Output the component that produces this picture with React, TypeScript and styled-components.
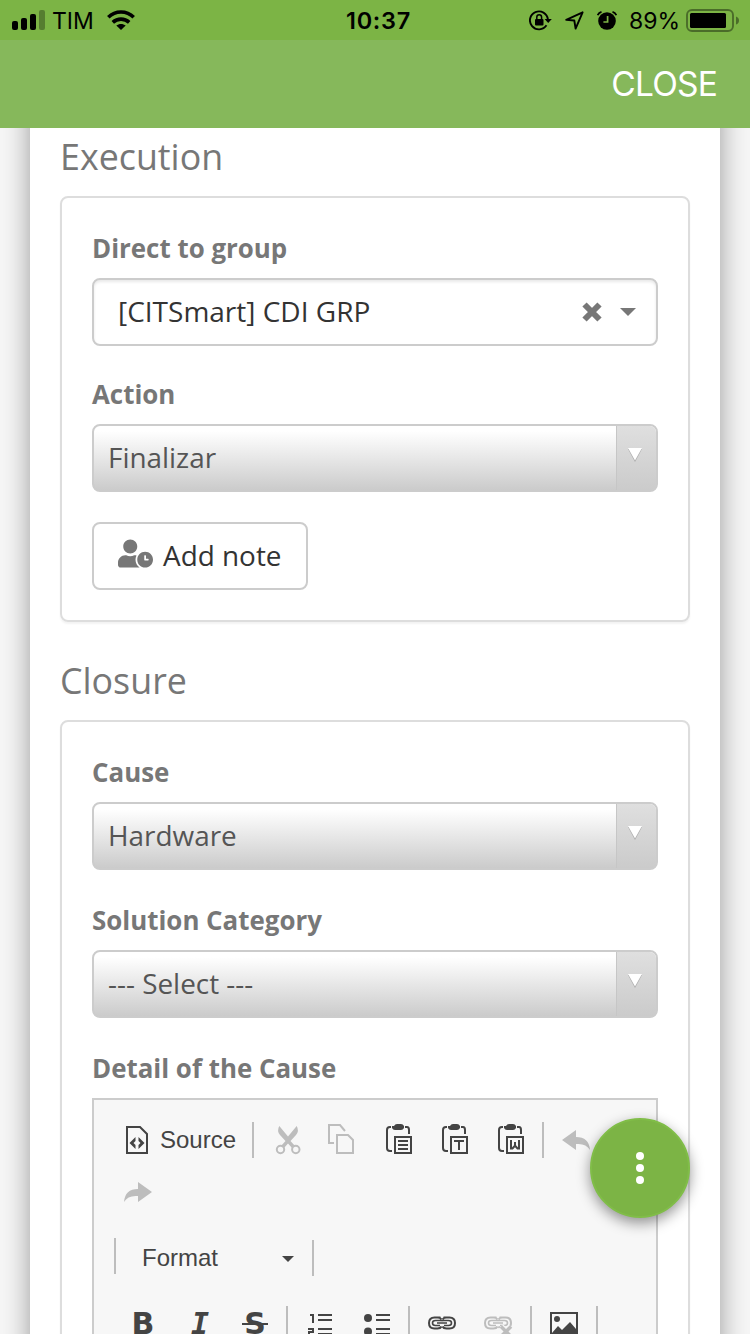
import React from "react";
import styled, { createGlobalStyle, css } from "styled-components";
import { FaUserClock } from "react-icons/fa";

const GlobalStyle = createGlobalStyle`
  * { box-sizing: border-box; }
  html, body { margin: 0; padding: 0; }
  body { overflow: hidden; background: #f6f6f6; }
`;

const sans = `"Open Sans", "Noto Sans", sans-serif`;
const system = `Inter, "Liberation Sans", sans-serif`;

const Screen = styled.div`
  width: 750px;
  height: 1334px;
  overflow: hidden;
  display: flex;
  flex-direction: column;
  background: #f6f6f6;
  font-family: ${sans};
  color: #333;
`;

const StatusBar = styled.div`
  flex: none;
  height: 40px;
  padding: 0 11px 0 12px;
  display: grid;
  grid-template-columns: 1fr auto 1fr;
  align-items: center;
  background: #7cb445;
  color: #000;
  font: 400 23px/40px ${system};
`;

const StatusGroup = styled.div<{ $end?: boolean }>`
  display: flex;
  align-items: center;
  justify-content: ${(p) => (p.$end ? "flex-end" : "flex-start")};
  svg { flex: none; display: block; }
`;

const Carrier = styled.span`
  margin: 0 13px 0 7px;
  padding-top: 2px;
  line-height: 38px;
`;

const Clock = styled.span`
  padding: 2px 0 0 6px;
  font-size: 23.5px;
  line-height: 38px;
  font-weight: 600;
  letter-spacing: 0.7px;
`;

const Percent = styled.span`
  margin: 0 6px 0 12px;
  padding-top: 2px;
  line-height: 38px;
`;

const StatusIcons = styled.span`
  display: flex;
  align-items: center;
  gap: 13px;
`;

const NavBar = styled.header`
  flex: none;
  height: 88px;
  padding: 0 33px;
  display: flex;
  align-items: center;
  justify-content: flex-end;
  background: #86b85b;
`;

const CloseButton = styled.button`
  border: 0;
  padding: 0;
  background: none;
  color: #fff;
  font: 400 33.5px/40px ${system};
  letter-spacing: -0.8px;
`;

const Viewport = styled.div`
  flex: 1;
  min-height: 0;
  overflow: hidden;
  padding: 0 30px;
`;

const Sheet = styled.main`
  height: 1460px;
  margin-top: -60px;
  padding: 63px 30px 0;
  background: #fff;
  box-shadow: 0 0 26px rgba(0, 0, 0, 0.38);
`;

const Title = styled.h2`
  margin: 0 0 15px;
  font: 400 35.8px/50px ${sans};
  color: #777;
`;

const Fieldset = styled.section`
  margin-bottom: 33px;
  padding: 30px;
  border: 2px solid #ddd;
  border-radius: 8px;
  box-shadow: 0 2px 2px rgba(0, 0, 0, 0.05);
`;

const Label = styled.div<{ $gap?: number }>`
  margin: ${(p) => p.$gap ?? 0}px 0 10px;
  font: 700 25.9px/40px ${sans};
  color: #777;
`;

const control = css`
  height: 68px;
  border: 2px solid #ccc;
  border-radius: 8px;
  font: 400 27.9px/62px ${sans};
`;

const Combo = styled.div`
  ${control}
  display: flex;
  align-items: center;
  padding: 0 20px 0 24px;
  background: #fff;
  box-shadow: inset 0 2px 3px rgba(0, 0, 0, 0.09);
  color: #333;
  svg { display: block; }
  svg + svg { margin-left: 18px; }
`;

const ComboValue = styled.span`
  flex: 1;
  padding-bottom: 2px;
  font-size: 28px;
`;

const Select = styled.div`
  ${control}
  display: flex;
  overflow: hidden;
  background: linear-gradient(#fff 8%, #cbcbcb 100%);
  color: #555;
`;

const SelectValue = styled.span`
  flex: 1;
  padding-left: 14px;
`;

const SelectHandle = styled.span`
  width: 40px;
  padding: 22px 0 0 11px;
  border-left: 1px solid #c6c6c6;
  background: linear-gradient(#dfdfdf, #cbcbcb);
  svg { display: block; }
`;

const NoteButton = styled.button`
  ${control}
  display: flex;
  align-items: center;
  width: 216px;
  margin-top: 30px;
  padding: 0 0 2px 24px;
  background: #fff;
  color: #333;
  svg { color: #777; margin: -4px 10px 0 0; }
`;

const Editor = styled.div`
  height: 400px;
  border: 2px solid #ccc;
  background: #f7f7f7;
  color: #444;
  font: 400 24px/36px "Liberation Sans", Arial, sans-serif;
`;

const ToolRow = styled.div<{ $top: number; $left: number }>`
  display: flex;
  align-items: center;
  height: 36px;
  margin-top: ${(p) => p.$top}px;
  padding-left: ${(p) => p.$left}px;
`;

const Tool = styled.span<{ $dim?: boolean; $width?: number }>`
  flex: none;
  display: flex;
  align-items: center;
  width: ${(p) => p.$width ?? 56}px;
  padding-left: 12px;
  color: ${(p) => (p.$dim ? "#bdbdbd" : "#444")};
  svg { flex: none; display: block; }
`;

const ToolText = styled.span`
  margin-left: 8px;
`;

const FormatPicker = styled.span`
  flex: none;
  display: flex;
  align-items: center;
  justify-content: space-between;
  width: 188px;
  padding: 4px 16px 0 20px;
  svg { margin-top: 2px; }
`;

const Divider = styled.i<{ $drop?: number }>`
  flex: none;
  width: 2px;
  height: 36px;
  margin: ${(p) => p.$drop ?? 0}px 6px 0 2px;
  background: #bdbdbd;
`;

const Glyph = styled.span<{ $kind: "b" | "i" | "s" }>`
  display: block;
  position: relative;
  width: ${(p) => (p.$kind === "i" ? 32 : 30)}px;
  text-align: center;
  color: #444;
  font: 700 30px/36px ${(p) => (p.$kind === "i" ? `"DejaVu Sans Mono", monospace` : `"DejaVu Sans", sans-serif`)};
  font-style: ${(p) => (p.$kind === "i" ? "italic" : "normal")};
`;

const Strike = styled.i`
  position: absolute;
  left: 2px;
  top: 17px;
  width: 26px;
  height: 2px;
  background: #444;
`;

const Fab = styled.button`
  position: fixed;
  left: 590px;
  top: 1118px;
  width: 100px;
  height: 100px;
  padding: 0;
  border: 2px solid #80bd48;
  border-radius: 50%;
  background: #7cb445;
  box-shadow: 0 5px 14px rgba(0, 0, 0, 0.42);
  display: flex;
  flex-direction: column;
  align-items: center;
  justify-content: center;
  gap: 4px;
`;

const Dot = styled.i`
  width: 8px;
  height: 8px;
  border-radius: 50%;
  background: #fff;
`;

const Icon = ({ children }: { children: React.ReactNode }) => (
  <svg width="32" height="32" viewBox="0 0 32 32" fill="none" stroke="currentColor" strokeWidth="2">
    {children}
  </svg>
);

const SignalIcon = () => (
  <svg width="33" height="20" viewBox="0 0 33 20">
    <rect x="0" y="11" width="6" height="9" rx="2" />
    <rect x="9" y="8" width="6" height="12" rx="2" />
    <rect x="18" y="4" width="6" height="16" rx="2" />
    <rect x="27" y="0" width="6" height="20" rx="2" opacity="0.3" />
  </svg>
);

const WifiIcon = () => (
  <svg width="28" height="20" viewBox="0 0 28 20" fill="none" stroke="#000" strokeWidth="3.6">
    <path d="M1.3 7.2C8.4 0.2 19.6 0.2 26.7 7.2" />
    <path d="M5.8 12.3C10.5 8 17.5 8 22.2 12.3" />
    <path d="M14 20L9.3 15.6C12 13.3 16 13.3 18.7 15.6Z" fill="#000" stroke="none" />
  </svg>
);

const RotationLockIcon = () => (
  <svg width="23" height="21" viewBox="0 0 23 21">
    <path d="M17.5 15.3A9 9 0 1 1 18.9 9.4" fill="none" stroke="#000" strokeWidth="1.9" />
    <path d="M15.6 8.9H22.8L19.2 13Z" />
    <rect x="6" y="9" width="8.5" height="6.5" rx="1" />
    <path d="M7.8 9.5V7.2A2.4 2.4 0 0 1 12.6 7.2V9.5" fill="none" stroke="#000" strokeWidth="1.5" />
  </svg>
);

const LocationIcon = () => (
  <svg width="19" height="19" viewBox="0 0 19 19" fill="none" stroke="#000" strokeWidth="1.9" strokeLinejoin="round">
    <path d="M1.2 8.9L17.6 1.3L10.6 17.6L9.3 9.5Z" />
  </svg>
);

const AlarmIcon = () => (
  <svg width="20" height="19" viewBox="0 0 20 19">
    <circle cx="10" cy="10" r="8.8" />
    <path d="M0.7 4.2Q1.8 1.7 4.5 0.9M19.3 4.2Q18.2 1.7 15.5 0.9" fill="none" stroke="#000" strokeWidth="1.8" />
    <path d="M10.6 5V11H6.4" fill="none" stroke="#7cb445" strokeWidth="1.7" />
  </svg>
);

const BatteryIcon = () => (
  <svg width="53" height="23" viewBox="0 0 53 23">
    <rect x="1" y="1" width="46" height="21" rx="5" fill="none" stroke="#000" strokeOpacity="0.4" strokeWidth="1.9" />
    <rect x="4" y="4" width="36" height="15" rx="1.5" />
    <path d="M50 7.5Q53 8.5 53 11.5Q53 14.5 50 15.5Z" opacity="0.4" />
  </svg>
);

const Paste = ({ children }: { children: React.ReactNode }) => (
  <Icon>
    <path d="M7 3H6Q3 3 3 6V24Q3 27 6 27H8M21 3H23Q25 3 25 6V10" />
    <path d="M8 2H10Q11 0 13 0H17Q19 0 20 2H20V4Q19 6 17 6H11Q9 6 8 4Z" fill="currentColor" stroke="none" />
    <rect x="11" y="13" width="16" height="16" />
    {children}
  </Icon>
);

const LinkShape = () => (
  <g transform="translate(0 -1.5)">
    <path d="M12.5 11H6.5Q1 11 1 16.5Q1 22 6.5 22H9.5Q12.5 22 13.5 20M15.5 11H21.5Q27 11 27 16.5Q27 22 21.5 22H18.5Q15.5 22 14.5 20M13.5 13Q12.5 11 9.5 11M14.5 13Q15.5 11 18.5 11" />
    <path d="M14 14.5Q13 13.5 11.5 14H7.5Q4.5 14 4.5 16.5Q4.5 19 7.5 19H12M14 14.5Q15 13.5 16.5 14H20.5Q23.5 14 23.5 16.5Q23.5 19 20.5 19H16M9 16.5H19" strokeWidth="1.6" />
  </g>
);

const SelectField = ({ value }: { value: string }) => (
  <Select>
    <SelectValue>{value}</SelectValue>
    <SelectHandle>
      <svg width="14" height="14" viewBox="0 0 14 14">
        <path d="M0 1L7 14L14 1" fill="#aaa" />
        <path d="M0 0H14L7 12.5Z" fill="#fff" />
      </svg>
    </SelectHandle>
  </Select>
);

export default function App() {
  return (
    <Screen>
      <GlobalStyle />
      <StatusBar>
        <StatusGroup>
          <SignalIcon />
          <Carrier>TIM</Carrier>
          <WifiIcon />
        </StatusGroup>
        <Clock>10:37</Clock>
        <StatusGroup $end>
          <StatusIcons>
            <RotationLockIcon />
            <LocationIcon />
            <AlarmIcon />
          </StatusIcons>
          <Percent>89%</Percent>
          <BatteryIcon />
        </StatusGroup>
      </StatusBar>
      <NavBar>
        <CloseButton>CLOSE</CloseButton>
      </NavBar>
      <Viewport>
        <Sheet>
          <Title>Execution</Title>
          <Fieldset>
            <Label>Direct to group</Label>
            <Combo>
              <ComboValue>[CITSmart] CDI GRP</ComboValue>
              <svg width="20" height="20" viewBox="0 0 20 20">
                <path d="M2.5 2.5L17.5 17.5M17.5 2.5L2.5 17.5" stroke="#777" strokeWidth="6" />
              </svg>
              <svg width="16" height="8" viewBox="0 0 16 8">
                <path d="M0 0H16L8 8Z" fill="#777" />
              </svg>
            </Combo>
            <Label $gap={28}>Action</Label>
            <SelectField value="Finalizar" />
            <NoteButton>
              <FaUserClock size={35} />
              Add note
            </NoteButton>
          </Fieldset>
          <Title>Closure</Title>
          <Fieldset>
            <Label>Cause</Label>
            <SelectField value="Hardware" />
            <Label $gap={30}>Solution Category</Label>
            <SelectField value="--- Select ---" />
            <Label $gap={30}>Detail of the Cause</Label>
            <Editor>
              <ToolRow $top={22} $left={14}>
                <Tool $width={142}>
                  <Icon>
                    <path d="M7 3H20L27 10V29H7Z" />
                    <path d="M15.5 13V17L13.5 19L15.5 21V25L9.5 19ZM18.5 13V17L20.5 19L18.5 21V25L24.5 19Z" fill="currentColor" stroke="none" />
                  </Icon>
                  <ToolText>Source</ToolText>
                </Tool>
                <Divider />
                <Tool $dim>
                  <Icon>
                    <path d="M7.3 2L16 12.5L24.7 2Q27.5 7 24 11L18.5 17L23 22L20 24L16 19.5L12 24L9 22L13.5 17L8 11Q4.5 7 7.3 2Z" fill="currentColor" stroke="none" />
                    <circle cx="8.5" cy="25.5" r="3.7" fill="#f7f7f7" />
                    <circle cx="23.8" cy="25.5" r="3.7" fill="#f7f7f7" />
                  </Icon>
                </Tool>
                <Tool $dim>
                  <Icon>
                    <path d="M6 19H1V1H12L17 7" />
                    <path d="M9 11H20L25 16V29H9Z" />
                  </Icon>
                </Tool>
                <Tool>
                  <Paste><path d="M14 17H24M14 21H24M14 25H24" /></Paste>
                </Tool>
                <Tool>
                  <Paste><path d="M14 17H24M19 17V26" /></Paste>
                </Tool>
                <Tool>
                  <Paste><path d="M15 16V24.5H16.5L19 21.5L21.5 24.5H23V16M19 18V22" /></Paste>
                </Tool>
                <Divider />
                <Tool $dim>
                  <Icon>
                    <path d="M0 16L14 6V13Q27 13 28 26Q24 19 14 20V26Z" fill="currentColor" stroke="none" />
                  </Icon>
                </Tool>
              </ToolRow>
              <ToolRow $top={16} $left={14}>
                <Tool $dim>
                  <Icon>
                    <path d="M32 16L18 6V13Q5 13 4 26Q8 19 18 20V26Z" fill="currentColor" stroke="none" />
                  </Icon>
                </Tool>
              </ToolRow>
              <ToolRow $top={28} $left={18}>
                <Divider />
                <FormatPicker>
                  Format
                  <svg width="12" height="6" viewBox="0 0 12 6">
                    <path d="M0 0H12L6 6Z" fill="#444" />
                  </svg>
                </FormatPicker>
                <Divider $drop={4} />
              </ToolRow>
              <ToolRow $top={32} $left={22}>
                <Tool><Glyph $kind="b">B</Glyph></Tool>
                <Tool><Glyph $kind="i">I</Glyph></Tool>
                <Tool><Glyph $kind="s">S<Strike /></Glyph></Tool>
                <Divider />
                <Tool>
                  <Icon>
                    <path d="M4 7H7V15M12 7H26M12 12H26M12 21H26M12 26H26M2 21H7V24H3V27H8" />
                  </Icon>
                </Tool>
                <Tool>
                  <Icon>
                    <path d="M14 7H28M14 12H28M14 21H28M14 26H28" />
                    <circle cx="6" cy="10" r="4" fill="currentColor" stroke="none" />
                    <circle cx="6" cy="23.5" r="4" fill="currentColor" stroke="none" />
                  </Icon>
                </Tool>
                <Divider />
                <Tool><Icon><LinkShape /></Icon></Tool>
                <Tool $dim>
                  <Icon>
                    <LinkShape />
                    <path d="M17 18.5L27 28.5M27 18.5L17 28.5" stroke="#f7f7f7" strokeWidth="6" />
                    <path d="M17 18.5L27 28.5M27 18.5L17 28.5" strokeWidth="3.5" />
                  </Icon>
                </Tool>
                <Divider />
                <Tool>
                  <Icon>
                    <rect x="1" y="5" width="26" height="24" />
                    <circle cx="7" cy="11" r="3" fill="currentColor" stroke="none" />
                    <path d="M2 25L8 18L12 22L20 14L26 21V28H2Z" fill="currentColor" stroke="none" />
                  </Icon>
                </Tool>
                <Divider />
              </ToolRow>
            </Editor>
          </Fieldset>
        </Sheet>
      </Viewport>
      <Fab aria-label="More actions">
        <Dot />
        <Dot />
        <Dot />
      </Fab>
    </Screen>
  );
}
